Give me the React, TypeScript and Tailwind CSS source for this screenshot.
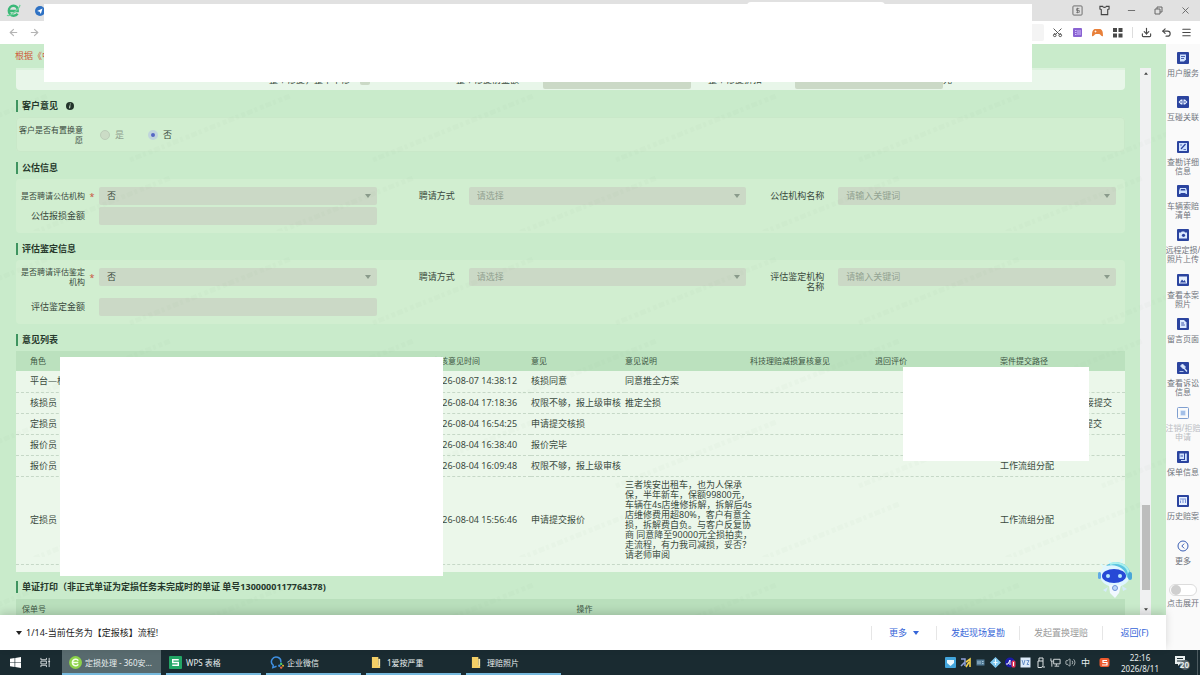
import { useId, useState } from 'react';
import type { ReactNode } from 'react';
import { ArrowLeft, ArrowRight, Download, Menu, Minus, Scissors, Undo2, Volume2, X } from 'lucide-react';

const sideItems = [
  { lines: ['用户服务'], icon: 'doc' },
  { lines: ['互碰关联'], icon: 'link' },
  { lines: ['查勘详细', '信息'], icon: 'edit' },
  { lines: ['车辆索赔', '清单'], icon: 'car' },
  { lines: ['远程定损/', '照片上传'], icon: 'camera' },
  { lines: ['查看本案', '照片'], icon: 'photo' },
  { lines: ['留言页面'], icon: 'note' },
  { lines: ['查看诉讼', '信息'], icon: 'gavel' },
  { lines: ['注销/拒赔', '申请'], icon: 'cancel' },
  { lines: ['保单信息'], icon: 'policy' },
  { lines: ['历史赔案'], icon: 'history' },
  { lines: ['更多'], icon: 'more' },
];

const rows = [
  { role: '平台—核损', time: '2026-08-07 14:38:12', opinion: '核损同意', desc: '同意推全方案', path: '', pad: '' },
  { role: '核损员', time: '2026-08-04 17:18:36', opinion: '权限不够，报上级审核', desc: '推定全损', path: '直接提交', pad: 'pl-19' },
  { role: '定损员', time: '2026-08-04 16:54:25', opinion: '申请提交核损', desc: '', path: '提交', pad: 'pl-21' },
  { role: '报价员', time: '2026-08-04 16:38:40', opinion: '报价完毕', desc: '', path: '', pad: '' },
  { role: '报价员', time: '2026-08-04 16:09:48', opinion: '权限不够，报上级审核', desc: '', path: '工作流组分配', pad: '' },
  {
    role: '定损员',
    time: '2026-08-04 15:56:46',
    opinion: '申请提交报价',
    desc: '三者埃安出租车，也为人保承\n保，半年新车，保额99800元，\n车辆在4s店维修拆解，拆解后4s\n店维修费用超80%，客户有意全\n损，拆解费自负。与客户反复协\n商 同意降至90000元全损拍卖，\n走流程，有力我司减损，妥否？\n请老师审阅',
    path: '工作流组分配',
    pad: '',
    tall: true,
  },
];

function SideIcon({ name }: { name: string }) {
  if (name === 'more') {
    return (
      <svg viewBox="0 0 12 12" className="size-3" fill="none" stroke="#3a5fb5">
        <circle cx="6" cy="6" r="5" />
        <path d="M7.2 3.6 4.8 6l2.4 2.4" />
      </svg>
    );
  }
  if (name === 'cancel') {
    return (
      <svg viewBox="0 0 12 12" className="size-3" fill="none" stroke="#7f9fd0">
        <rect x="0.5" y="0.5" width="11" height="11" rx="1" />
        <rect x="3.5" y="3.5" width="5" height="5" fill="#b9d3f5" stroke="none" />
        <path d="M4 5h4M4 7h4" strokeWidth="0.7" />
      </svg>
    );
  }
  return (
    <svg viewBox="0 0 12 12" className="size-3">
      <rect width="12" height="12" rx="1" fill="#2b449f" />
      {name === 'doc' && (
        <>
          <path d="M3 2.5h6v5l-2 2H3z" fill="#cfe2ff" />
          <path d="M4 4.5h4M4 6.5h3" stroke="#2b449f" strokeWidth="0.8" />
        </>
      )}
      {name === 'link' && (
        <>
          <path d="M1.5 6 4 3.5h1.5v5H4zM10.5 6 8 3.5H6.5v5H8z" fill="#e6f0ff" />
          <circle cx="4" cy="6" r="0.8" fill="#2b449f" />
          <circle cx="8" cy="6" r="0.8" fill="#2b449f" />
        </>
      )}
      {name === 'edit' && (
        <>
          <rect x="2" y="2" width="8" height="8" fill="#cfe2ff" />
          <path d="m4 8 4.5-5" stroke="#2b449f" strokeWidth="1.2" />
          <path d="M3 4h2M6.5 8.5H9" stroke="#2b449f" strokeWidth="0.7" />
        </>
      )}
      {name === 'car' && (
        <>
          <path d="M2 6l1-3h6l1 3v3H8.5V8h-5v1H2z" fill="#cfe2ff" />
          <path d="M3.5 5.5 4 4h4l.5 1.5z" fill="#2b449f" />
        </>
      )}
      {name === 'camera' && (
        <>
          <path d="M2 3.5h2l.7-1h2.6l.7 1h2v6H2z" fill="#dbe9ff" />
          <circle cx="6.5" cy="6.3" r="1.6" fill="#2b449f" />
        </>
      )}
      {name === 'photo' && (
        <>
          <rect x="2" y="2.5" width="8" height="7" fill="#e6f0ff" />
          <path d="m3 8.5 2-3 1.5 1.8L7.5 6 9 8.500z" fill="#2b449f" />
        </>
      )}
      {name === 'note' && (
        <>
          <path d="M3 2h4l2.5 2.5V10H3z" fill="#dbe9ff" />
          <path d="M4.2 5H7M4.2 7h3.6" stroke="#2b449f" strokeWidth="0.9" />
        </>
      )}
      {name === 'gavel' && (
        <>
          <path d="m5.5 2 3 3-2 2-3-3zM2.5 9.5h4" stroke="#dbe9ff" fill="#dbe9ff" strokeWidth="0.8" />
          <path d="m7 6 3 3.5" stroke="#dbe9ff" strokeWidth="1.2" />
        </>
      )}
      {name === 'policy' && (
        <>
          <path d="M2.5 2.5H7V8H2.5zM8 2.5h1.8V10H4V9h4z" fill="#cfe2ff" />
          <path d="M3.5 5H6" stroke="#2b449f" strokeWidth="0.9" />
        </>
      )}
      {name === 'history' && (
        <>
          <rect x="2" y="2" width="8" height="8" fill="#e6f0ff" />
          <path d="M3.5 5.500V8M6 4.500V8M8.500 4.500V8M3 4h6" stroke="#5d7bd0" strokeWidth="0.8" />
        </>
      )}
    </svg>
  );
}

function Caret({ className }: { className: string }) {
  return (
    <svg viewBox="0 0 6 4" className={className} fill="currentColor">
      <path d="M0 0h6L3 4z" />
    </svg>
  );
}

function SectionTitle({ children }: { children: ReactNode }) {
  return (
    <h2 className="flex h-[27px] items-center gap-1 pt-1 font-bold text-[#26382b]">
      <span className="h-3 w-[2px] bg-[#3f9460]" />
      {children}
    </h2>
  );
}

type FieldProps = {
  label: ReactNode;
  value?: string;
  select?: boolean;
  required?: boolean;
  muted?: boolean;
  small?: boolean;
};

function Field({ label, value, select, required, muted, small }: FieldProps) {
  const id = useId();
  return (
    <div className="flex items-start pr-[9px]">
      <label htmlFor={id} className={`w-[69px] text-right leading-[10px] ${small ? (typeof label === 'string' ? 'mt-1 text-[8px]' : '-mt-px text-[8px]') : 'mt-1'}`}>
        {label}
      </label>
      <span className="mt-[5px] w-[14px] text-center text-[#c8553d]">{required && '*'}</span>
      <div className="relative flex-1">
        {select ? (
          <>
            <select
              id={id}
              disabled
              className={`block h-[18px] w-full appearance-none rounded-xs bg-[#cbd9c6] px-2 opacity-100 ${muted ? 'text-[#93a392]' : 'text-[#36463a]'}`}
            >
              <option>{value}</option>
            </select>
            <Caret className="absolute top-[7px] right-1.5 h-1 w-1.5 text-[#8a9b8b]" />
          </>
        ) : (
          <input id={id} disabled className="block h-[18px] w-full rounded-xs bg-[#cbd9c6] px-2" />
        )}
      </div>
    </div>
  );
}

function Watermark() {
  return (
    <svg className="pointer-events-none absolute inset-0 h-full w-full" aria-hidden="true">
      <defs>
        <pattern id="wm" width="243" height="163" patternUnits="userSpaceOnUse">
          <g stroke="#3c6b4a" strokeOpacity="0.025" strokeWidth="5" strokeDasharray="4 2 6 2 3 3">
            <path d="M130 92 290 28M-113 92 47 28M10 174 170 110" />
          </g>
        </pattern>
      </defs>
      <rect width="100%" height="100%" fill="url(#wm)" />
    </svg>
  );
}

function Robot() {
  return (
    <svg viewBox="0 0 36 40" className="absolute right-8 bottom-4 h-10 w-9">
      <path d="M13 5 11 1M23 3l1-3M6 8 3 5" stroke="#d9fbff" strokeWidth="1.5" />
      <ellipse cx="17" cy="16" rx="15" ry="12" fill="#dff6ff" />
      <path d="M8 7c8-7 23-4 25 9l-4 3C28 9 18 4 8 7z" fill="#5cc3e0" />
      <path d="M12 5c8-3 18 1 19 10" fill="none" stroke="#a9f1ee" strokeWidth="2" />
      <rect x="30" y="13" width="4" height="8" rx="2" fill="#4aa7d8" />
      <rect x="0" y="13" width="3" height="7" rx="1.5" fill="#5fa9e6" />
      <ellipse cx="16" cy="17" rx="12" ry="7" fill="#2749d6" />
      <circle cx="10" cy="17" r="2" fill="#b7e9ff" />
      <circle cx="22" cy="17" r="2" fill="#b7e9ff" />
      <path d="M11 26h12l-2 8-4 5-5-5z" fill="#f1f8ff" />
      <path d="m10 28-5 3 3 2zM24 27l5 3-4 2z" fill="#d5ecfb" />
      <circle cx="17" cy="29" r="2.5" fill="#bcd6f8" stroke="#6f94d8" />
    </svg>
  );
}

function BrowserBar() {
  return (
    <header>
      <div className="flex h-[21px] items-center justify-between bg-[#e1e1e1] pr-[9px] pl-1.5">
        <div className="flex items-center gap-[14px]">
          <svg viewBox="0 0 16 16" className="size-[15px]" fill="none">
            <path d="M3 8.5h9.5C13 5 10.8 3 8 3 5 3 3 5.3 3 8.2c0 3.300 2.200 5.300 5.200 5.300 1.800 0 3.200-.7 4.200-2" stroke="#3cb878" strokeWidth="2.6" />
            <path d="M1 13C4 15 14 7 15 2" stroke="#6fd39a" strokeWidth="1.3" />
          </svg>
          <svg viewBox="0 0 12 12" className="size-2.5">
            <circle cx="6" cy="6" r="6" fill="#2f72c4" />
            <path d="m2.5 6 6.500-3-2 6.500L5.500 7z" fill="#fff" />
          </svg>
        </div>
        <div className="flex items-center gap-4 text-[#666]">
          <button aria-label="钱包">
            <svg viewBox="0 0 12 12" className="size-[11px]" fill="none" stroke="currentColor">
              <rect x="1" y="1" width="10" height="10" rx="1" />
              <path d="M8 4H5v2h3v2H4.5M6 3v6" strokeWidth="0.8" />
            </svg>
          </button>
          <button aria-label="皮肤">
            <svg viewBox="0 0 12 12" className="size-[11px]" fill="none" stroke="#444" strokeWidth="1.2">
              <path d="M1 1.5h3c.5 1.500 3.500 1.500 4 0h3v3L9.500 5v5.500h-7V5L1 4.500z" />
            </svg>
          </button>
          <button aria-label="最小化"><Minus className="size-[11px]" /></button>
          <button aria-label="还原">
            <svg viewBox="0 0 11 11" className="size-[11px]" fill="none" stroke="currentColor">
              <path d="M2 4h5v5H2zM4 4V2h5v5H7" />
            </svg>
          </button>
          <button aria-label="关闭"><X className="size-[11px]" /></button>
        </div>
      </div>
      <div className="flex h-[23px] items-center bg-white pr-2 pl-2">
        <div className="flex gap-[10px] text-[#b4b4b4]">
          <button aria-label="后退"><ArrowLeft className="size-[11px]" strokeWidth={2.5} /></button>
          <button aria-label="前进"><ArrowRight className="size-[11px]" strokeWidth={2.5} /></button>
        </div>
        <div className="ml-2 h-[17px] flex-1 rounded-xs bg-[#f4f4f4]" />
        <div className="ml-2 flex items-center gap-[9px] text-[#484848]">
          <button aria-label="截图"><Scissors className="size-[11px] -rotate-90" /></button>
          <button aria-label="扩展">
            <svg viewBox="0 0 11 11" className="size-[11px]">
              <rect x="1" y="1" width="9" height="9" rx="1" fill="#8a63d2" />
              <path d="M3 3.5h1.500M3 5.500h1.500M3 7.500h1.500M6 3v5M8 3v5" stroke="#d9c8ff" strokeWidth="0.9" />
            </svg>
          </button>
          <button aria-label="游戏">
            <svg viewBox="0 0 11 11" className="size-[11px]">
              <path d="M0 9c0-5 1-7 3.500-7h4C10 2 11 4 11 9c-2 1-2.500-2-4-2H4C2.500 7 2 10 0 9z" fill="#e8803a" />
              <path d="M3.500 3.500v2M2.500 4.500h2" stroke="#fff" strokeWidth="0.7" />
            </svg>
          </button>
          <button aria-label="应用">
            <svg viewBox="0 0 11 11" className="size-[11px]" fill="currentColor">
              <path d="M1 1h4v4H1zM6.500 1h4v4h-4zM1 6.500h4v4H1zM6.500 6.500h4v4h-4z" />
            </svg>
          </button>
          <div className="flex items-center gap-[9px] border-l border-[#ddd] pl-2">
            <button aria-label="下载"><Download className="size-[11px]" strokeWidth={2.5} /></button>
            <button aria-label="恢复"><Undo2 className="size-[11px]" strokeWidth={2.5} /></button>
            <button aria-label="菜单"><Menu className="size-[11px]" strokeWidth={2.5} /></button>
          </div>
        </div>
      </div>
      <div className="absolute top-0.5 left-[747px] h-1 w-[138px] rounded-t-sm bg-white" />
      {/* blank cover over the tabs and address bar */}
      <div className="absolute top-1 right-[168px] left-11 z-20 h-[78px] bg-white" />
    </header>
  );
}

function OpinionTable() {
  return (
    <div className="relative bg-[#ebf7ea] pb-[7px]">
      <table className="w-full table-fixed text-left">
        <colgroup>
          <col />
          <col className="w-[99px]" />
          <col className="w-[94px]" />
          <col className="w-[125px]" />
          <col className="w-[125px]" />
          <col className="w-[125px]" />
          <col className="w-[125px]" />
        </colgroup>
        <thead className="bg-[#bbe1be] text-[8px] text-[#3e5744]">
          <tr className="h-5">
            <th className="pl-[14px] font-normal">角色</th>
            <th className="font-normal">审核意见时间</th>
            <th className="font-normal">意见</th>
            <th className="font-normal">意见说明</th>
            <th className="font-normal whitespace-nowrap">科技理赔减损复核意见</th>
            <th className="font-normal">退回评价</th>
            <th className="font-normal">案件提交路径</th>
          </tr>
        </thead>
        <tbody>
          {rows.map((row) => (
            <tr key={row.time} className={`border-b border-dashed border-[#c6d8c7] ${row.tall ? 'h-[88px]' : 'h-[21px]'}`}>
              <td className="pl-[14px]">{row.role}</td>
              <td className="whitespace-nowrap">{row.time}</td>
              <td className="whitespace-nowrap">{row.opinion}</td>
              <td className="leading-[10px] whitespace-pre">{row.desc}</td>
              <td />
              <td />
              <td className={row.pad}>{row.path}</td>
            </tr>
          ))}
        </tbody>
      </table>
      <div className="absolute top-1.5 left-11 z-10 h-[219px] w-[383px] bg-white" />
      <div className="absolute top-4 right-9 z-10 h-[94px] w-[186px] bg-white" />
    </div>
  );
}

function Sidebar() {
  const [expanded, setExpanded] = useState(false);
  return (
    <aside className="flex w-[34px] shrink-0 flex-col overflow-hidden bg-[#fafafa] pt-2 text-[8px] leading-[9px] text-[#70747c]">
      <ul className="flex flex-1 flex-col">
        {sideItems.map((item) => (
          <li key={item.icon} className="flex-1">
            <button className={`flex w-full flex-col items-center gap-1 whitespace-nowrap ${item.icon === 'cancel' ? 'text-[#b9bcc2]' : ''}`}>
              <SideIcon name={item.icon} />
              <span>
                {item.lines.map((line) => (
                  <span key={line} className="block">{line}</span>
                ))}
              </span>
            </button>
          </li>
        ))}
      </ul>
      <label className="flex h-[66px] flex-col items-center gap-0.5 whitespace-nowrap">
        <span className="flex h-3 w-7 items-center rounded-full border border-[#dcdcdc] bg-white px-px">
          <input
            type="checkbox"
            checked={expanded}
            onChange={() => setExpanded(!expanded)}
            className="size-2.5 appearance-none rounded-full bg-[#cfcfcf] checked:ml-auto"
          />
        </span>
        点击展开
      </label>
    </aside>
  );
}

function Folder() {
  return (
    <svg viewBox="0 0 12 14" className="h-[13px] w-[11px]">
      <path d="M1 1h7v9l2 1v2H1z" fill="#f3cf66" />
      <path d="M8 3h2v8H8z" fill="#fbe7a6" />
    </svg>
  );
}

function Taskbar() {
  return (
    <footer className="flex h-[25px] items-stretch bg-[#1a2b31] text-[8px] text-[#e8eeee]">
      <button aria-label="开始" className="flex w-[30px] items-center justify-center">
        <svg viewBox="0 0 12 12" className="size-[11px]" fill="#fff">
          <path d="M0 2l5-.8v4.500H0zM5.700 1.100 12 0v5.700H5.700zM0 6.400h5v4.500L0 10zM5.700 6.400H12V12l-6.300-1z" />
        </svg>
      </button>
      <button aria-label="任务视图" className="mr-0.5 flex w-[30px] items-center justify-center">
        <svg viewBox="0 0 12 12" className="size-[11px]" fill="none" stroke="#dfe5e6">
          <path d="M1 1v2h6V1M1 11V9h6v2M1 4.500h6v3H1zM10 1v10M9 5h2" />
        </svg>
      </button>
      <div className="flex gap-[5px]">
        <button className="flex w-[99px] items-center gap-[3px] border-b-2 border-[#76b9dd] bg-[#586a6e] pt-0.5 pl-[7px]">
          <svg viewBox="0 0 14 14" className="size-[13px]">
            <circle cx="7" cy="7" r="7" fill="#8cd14a" />
            <path d="M4 7h6M10 5A3.500 3.500 0 1 0 10 9" stroke="#f4ffe9" strokeWidth="1.6" fill="none" />
          </svg>
          定损处理 - 360安...
        </button>
        <button className="flex w-[95px] items-center gap-1 border-b-2 border-[#76b9dd] pt-0.5 pl-[3px]">
          <svg viewBox="0 0 14 14" className="size-[13px]">
            <rect width="14" height="14" rx="1" fill="#22a565" />
            <path d="M10.500 4H4v3h6v3H3.500" stroke="#fff" strokeWidth="1.5" fill="none" />
          </svg>
          WPS 表格
        </button>
        <button className="flex w-[95px] items-center gap-[3px] border-b-2 border-[#76b9dd] pt-0.5 pl-1">
          <svg viewBox="0 0 15 14" className="h-[13px] w-[14px]">
            <path d="M7 11 3 12.500 3.500 10A5 5 0 1 1 11.500 7" stroke="#3f8fe0" strokeWidth="1.6" fill="none" />
            <circle cx="12" cy="8.5" r="1.3" fill="#4cc764" />
            <circle cx="10" cy="10.5" r="1.3" fill="#3f8fe0" />
            <circle cx="14" cy="10.5" r="1" fill="#f6c02d" />
            <circle cx="12" cy="12.5" r="1.3" fill="#ee6b3b" />
          </svg>
          企业微信
        </button>
        <button className="flex w-[95px] items-center gap-[5px] border-b-2 border-[#76b9dd] pt-0.5 pl-[5px]">
          <Folder />
          1爱按严重
        </button>
        <button className="flex w-[95px] items-center gap-[5px] border-b-2 border-[#76b9dd] pt-0.5 pl-[5px]">
          <Folder />
          理赔照片
        </button>
      </div>
      <div className="ml-auto flex items-center gap-1">
        <svg viewBox="0 0 11 11" className="size-[11px]">
          <rect width="11" height="11" rx="1" fill="#42a5dc" />
          <path d="M2 3h7v3L5.500 9 2 6z" fill="#e9f8ff" />
        </svg>
        <svg viewBox="0 0 11 11" className="size-[11px]" fill="none">
          <path d="M1 2h4v7M1 9l4-4" stroke="#8fa0d8" strokeWidth="1.5" />
          <path d="M6 5l4-3v8M6 10l3-5" stroke="#f0cf4c" strokeWidth="1.6" />
        </svg>
        <svg viewBox="0 0 11 11" className="size-[11px]">
          <rect x="1.5" y="2.5" width="8" height="6" fill="#527b96" />
          <path d="M3 4v3M5 4v3M7 4.500h1.500M7 6.500h1.500" stroke="#b9d5e4" strokeWidth="0.8" />
        </svg>
        <svg viewBox="0 0 11 11" className="size-[11px]">
          <path d="M5.500 0 11 5.500 5.500 11 0 5.500z" fill="#7ec7ee" />
          <path d="M5.500 2v6M3.500 5.500h4" stroke="#f0fbff" />
        </svg>
        <svg viewBox="0 0 11 11" className="size-[11px]">
          <circle cx="5" cy="5.5" r="5" fill="#1b1ba8" />
          <path d="M1 7h2l2-4v5" stroke="#fff" fill="none" />
          <rect x="6.5" y="3.5" width="4" height="7" rx="1.5" fill="#e6395a" />
          <path d="M8.500 5v4" stroke="#fff" />
        </svg>
        <svg viewBox="0 0 11 11" className="size-[11px]">
          <rect x="0.5" y="0.5" width="10" height="10" fill="#dceaf8" />
          <path d="m2 3 1.500 5L5 3M6.500 3.500H9l-2 4h2" stroke="#5b87c2" fill="none" strokeWidth="0.9" />
        </svg>
        <svg viewBox="0 0 11 11" className="size-[11px]" fill="none" stroke="#dfe5e6">
          <path d="M4 4V1h4v3M3 4h5v4.500a2 2 0 0 1-2 2H3zM8 10h2" />
        </svg>
        <svg viewBox="0 0 12 11" className="size-[11px]" fill="none" stroke="#dfe5e6">
          <path d="M4 2h7v5H4zM7 7v2M5 9.500h5M1 1v3h2M2 4v6" />
        </svg>
        <Volume2 className="size-[11px]" strokeWidth={1.5} />
        <span className="w-[11px] text-center text-[9px]">中</span>
        <svg viewBox="0 0 11 11" className="ml-1 size-[11px]">
          <rect x="0.5" y="1" width="10" height="9" rx="2" fill="#ee5a2e" />
          <path d="M8 3.500H4v2h4V8H3" stroke="#fff" strokeWidth="1.2" fill="none" />
        </svg>
        <div className="w-[52px] text-center leading-[11px]">
          22:16
          <br />
          2026/8/11
        </div>
        <button aria-label="通知" className="relative mr-1.5 ml-1 size-[17px]">
          <svg viewBox="0 0 17 17" className="size-[17px]">
            <path d="M1 2h10v8H6l-2 2v-2H1z" fill="#e8eeee" />
            <path d="M3 4.500h6M3 7h6" stroke="#1a2b31" />
            <circle cx="11" cy="11" r="5" fill="#56646a" />
          </svg>
          <span className="absolute right-0.5 bottom-0.5 text-[8px] leading-[8px] font-bold">20</span>
        </button>
      </div>
      <div className="mr-0.5 border-l border-[#4d5b60]" />
    </footer>
  );
}

export default function App() {
  return (
    <div className="relative flex h-screen flex-col overflow-hidden bg-[#c9ebcb] font-['Noto_Sans','Noto_Sans_CJK_SC',sans-serif] text-[9px] leading-[10px] text-[#3a4a3e]">
      <BrowserBar />
      <div className="flex min-h-0 flex-1">
        <div className="flex min-w-0 flex-1 flex-col">
          <p className="flex h-6 shrink-0 items-center pl-[15px] text-[#cf5a3c]">根据《中</p>
          <main className="relative flex min-h-0 flex-1 overflow-hidden pr-[15px] pl-4">
            <div className="mr-[15px] min-w-0 flex-1">
              <div className="flex h-[22px] items-center rounded-b-sm border-t-2 border-[#dcf2dd] bg-[#e8f6e9] pl-[253px]">
                <label htmlFor="whole">整个修复，整单不修</label>
                <input id="whole" type="checkbox" disabled className="ml-2.5 size-2.5 appearance-none rounded-xs bg-[#cbd9c6]" />
                <label htmlFor="before" className="ml-[86px]">整个修复前金额</label>
                <input id="before" disabled className="ml-6 h-[18px] w-[148px] rounded-xs bg-[#cbd9c6]" />
                <label htmlFor="discount" className="ml-[17px]">整个修复折扣</label>
                <input id="discount" disabled className="ml-[33px] h-[18px] w-[148px] rounded-xs bg-[#cbd9c6]" />
                <span>元</span>
              </div>

              <SectionTitle>
                客户意见
                <svg viewBox="0 0 8 8" className="ml-1 size-2">
                  <circle cx="4" cy="4" r="4" fill="#22332a" />
                  <path d="M4.300 1.500v1M4 3.300 3.600 6.300" stroke="#d7eed8" />
                </svg>
              </SectionTitle>
              <fieldset className="flex h-[35px] items-center rounded-sm border border-[#c9e8c9] bg-[#d1eed0]">
                <legend className="sr-only">客户意见</legend>
                <span className="w-[66px] text-right text-[8px] leading-[10px]">
                  客户是否有置换意
                  <br />愿
                </span>
                <label className="ml-[17px] flex items-center gap-[5px] text-[#8fa08f]">
                  <input type="radio" name="swap" disabled className="size-2.5 appearance-none rounded-full border border-[#bccdb9] bg-[#cbdcc6]" />
                  是
                </label>
                <label className="ml-6 flex items-center gap-[5px]">
                  <input
                    type="radio"
                    name="swap"
                    defaultChecked
                    className="size-2.5 appearance-none rounded-full border-[3px] border-[#c0d5dc] bg-[#5566c4]"
                  />
                  否
                </label>
              </fieldset>

              <SectionTitle>公估信息</SectionTitle>
              <div className="grid grid-cols-3 gap-y-0.5 rounded-sm bg-[#d1eed0] pt-2 pb-2">
                <Field label="是否聘请公估机构" value="否" select required small />
                <Field label="聘请方式" value="请选择" select muted />
                <Field label="公估机构名称" value="请输入关键词" select muted />
                <Field label="公估报损金额" />
              </div>

              <SectionTitle>评估鉴定信息</SectionTitle>
              <div className="grid grid-cols-3 gap-y-1.5 rounded-sm bg-[#d1eed0] pt-2 pb-2">
                <Field label={<>是否聘请评估鉴定<br />机构</>} value="否" select required small />
                <Field label="聘请方式" value="请选择" select muted />
                <Field label={<>评估鉴定机构<br />名称</>} value="请输入关键词" select muted />
                <Field label="评估鉴定金额" />
              </div>

              <SectionTitle>意见列表</SectionTitle>
              <OpinionTable />

              <SectionTitle>单证打印（非正式单证为定损任务未完成时的单证 单号1300000117764378)</SectionTitle>
              <table className="w-full table-fixed bg-[#b9dfbc] text-left text-[8px] text-[#3e5744]">
                <thead>
                  <tr className="h-5">
                    <th className="pl-1.5 font-normal">保单号</th>
                    <th className="pl-1.5 font-normal">操作</th>
                  </tr>
                </thead>
              </table>
            </div>

            <div className="flex w-[11px] flex-col items-center justify-between bg-[#f0f1f2] py-1 text-[#444]">
              <Caret className="h-[3px] w-1 rotate-180" />
              <div className="mt-auto mb-[18px] h-[85px] w-2 bg-[#bdbdbd]" />
              <Caret className="h-[3px] w-1" />
            </div>
            <Watermark />
            <Robot />
          </main>

          <div className="relative z-10 flex h-[35px] shrink-0 items-center bg-white pl-4 shadow-[0_-3px_8px_rgba(0,0,0,0.15)]">
            <button className="flex items-center gap-1 text-[#222]">
              <Caret className="h-1 w-1.5" />
              1/14-当前任务为【定报核】流程!
            </button>
            <div className="ml-auto flex items-center divide-x divide-[#e6e6e6] border-l border-[#e6e6e6] text-[#3565d8]">
              <button className="flex h-[14px] w-[65px] items-center justify-center gap-1.5">
                更多
                <Caret className="h-1 w-1.5" />
              </button>
              <button className="h-[14px] w-[83px]">发起现场复勘</button>
              <button disabled className="h-[14px] w-[83px] text-[#9a9a9a]">发起置换理赔</button>
              <button className="h-[14px] w-[63px]">返回(F)</button>
            </div>
          </div>
        </div>
        <Sidebar />
      </div>
      <Taskbar />
    </div>
  );
}
